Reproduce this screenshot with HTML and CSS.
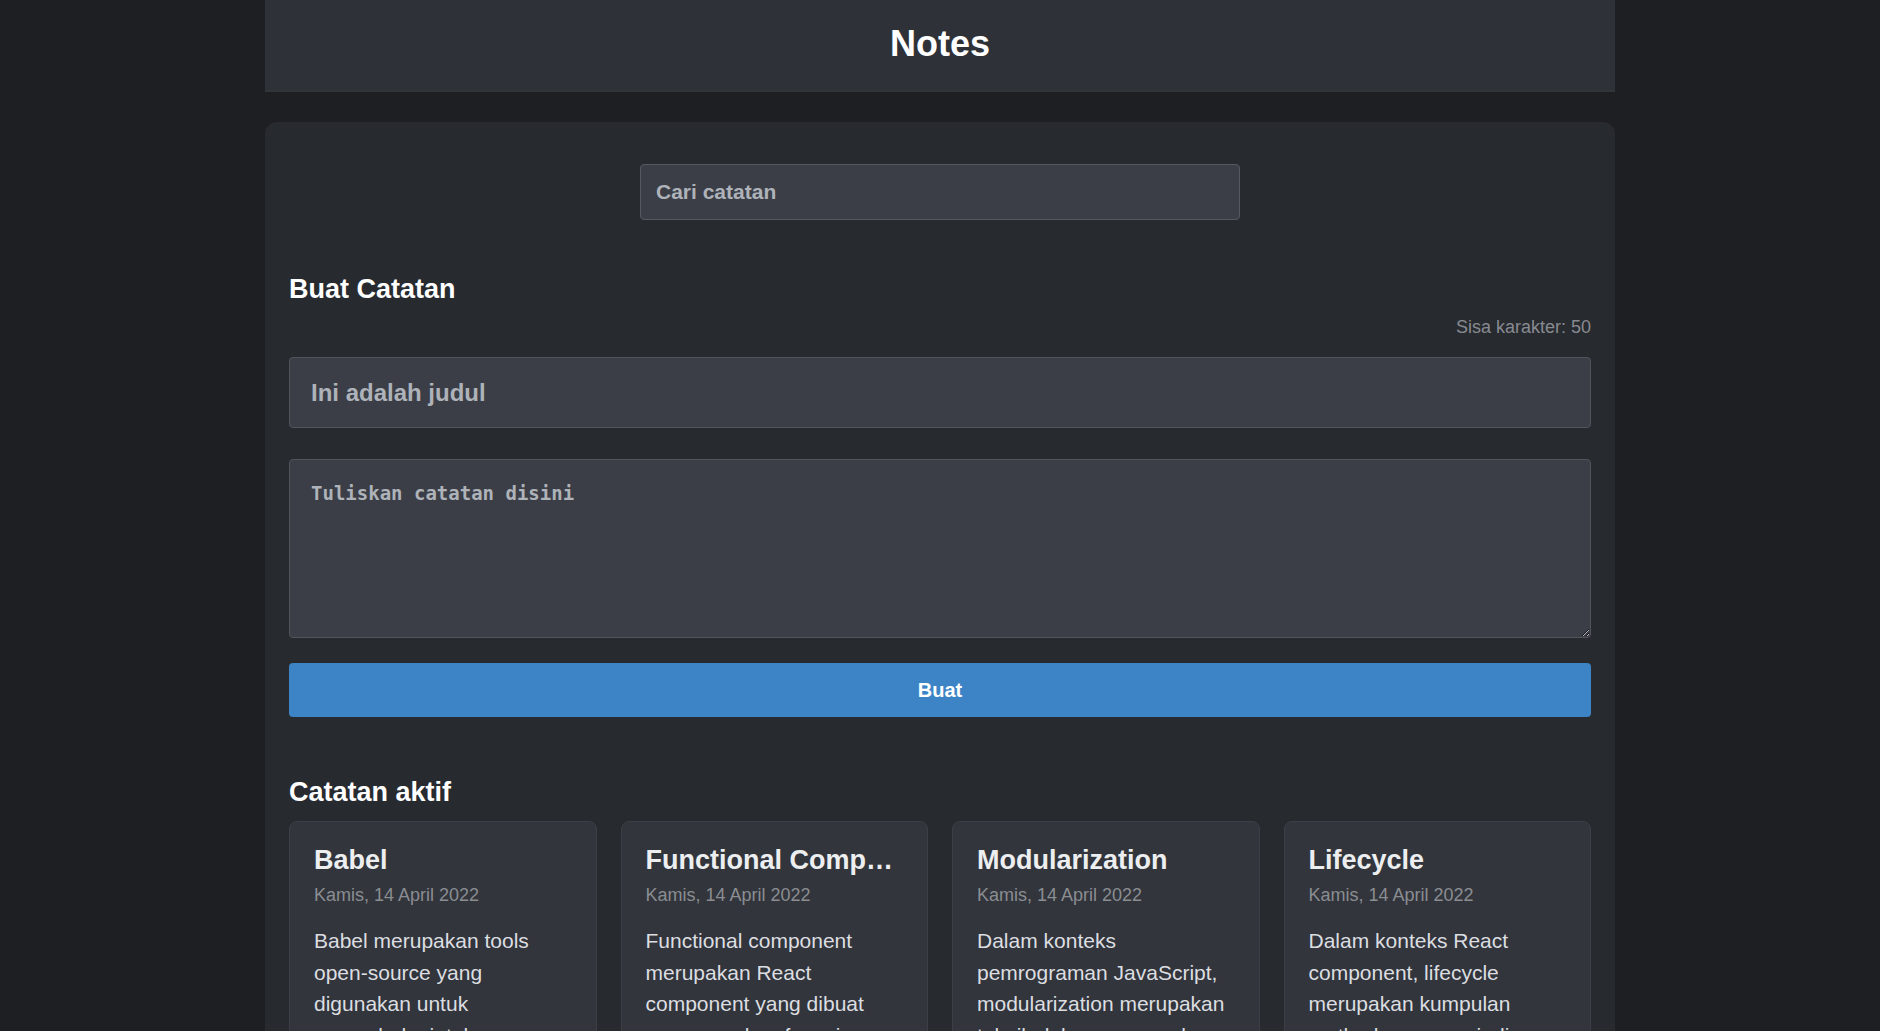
FILE: index.html
```html
<!DOCTYPE html>
<html lang="id">
<head>
<meta charset="utf-8">
<title>Notes</title>
<link rel="stylesheet" href="styles.css">
</head>
<body>
<div class="app">
  <header class="app-header">
    <h1 class="app-title">Notes</h1>
  </header>
  <main class="app-body">
    <div class="search">
      <input class="search-input" type="text" placeholder="Cari catatan">
    </div>
    <section class="create">
      <h2 class="section-title">Buat Catatan</h2>
      <p class="char-limit">Sisa karakter: 50</p>
      <input class="title-input" type="text" placeholder="Ini adalah judul">
      <textarea class="body-input" placeholder="Tuliskan catatan disini"></textarea>
      <button class="submit" type="button">Buat</button>
    </section>
    <section class="notes">
      <h2 class="section-title notes-title">Catatan aktif</h2>
      <div class="notes-grid">
        <article class="note">
          <h3 class="note-title">Babel</h3>
          <p class="note-date">Kamis, 14 April 2022</p>
          <p class="note-body">Babel merupakan tools open-source yang digunakan untuk mengubah sintaks ECMAScript 2015+ menjadi sintaks yang didukung oleh JavaScript engine versi lama.</p>
        </article>
        <article class="note">
          <h3 class="note-title">Functional Component</h3>
          <p class="note-date">Kamis, 14 April 2022</p>
          <p class="note-body">Functional component merupakan React component yang dibuat menggunakan fungsi JavaScript. Agar fungsi JavaScript dapat disebut component, ia harus mengembalikan React element.</p>
        </article>
        <article class="note">
          <h3 class="note-title">Modularization</h3>
          <p class="note-date">Kamis, 14 April 2022</p>
          <p class="note-body">Dalam konteks pemrograman JavaScript, modularization merupakan teknik dalam memecah atau menggunakan kode dalam berkas JavaScript secara terpisah berdasarkan tanggung jawabnya masing-masing.</p>
        </article>
        <article class="note">
          <h3 class="note-title">Lifecycle</h3>
          <p class="note-date">Kamis, 14 April 2022</p>
          <p class="note-body">Dalam konteks React component, lifecycle merupakan kumpulan method yang menjadi siklus hidup mulai dari component dibuat (constructor), dicetak (render), pasca-cetak (componentDidMount), dan sebagainya.</p>
        </article>
      </div>
    </section>
  </main>
</div>
</body>
</html>
```

FILE: styles.css
```css
* {
  box-sizing: border-box;
}

html, body {
  margin: 0;
  padding: 0;
  background: #1e1f23;
}

body {
  font-family: "Liberation Sans", Arial, sans-serif;
  color: #f2f3f5;
}

.app {
  width: 1350px;
  margin: 0 auto;
}

.app-header {
  height: 92px;
  background: #2e3137;
  border-bottom: 2px solid #333639;
  display: flex;
  align-items: center;
  justify-content: center;
}

.app-title {
  margin: 0;
  font-size: 36px;
  font-weight: 700;
  line-height: 1;
  color: #ffffff;
  padding-bottom: 2px;
}

.app-body {
  margin-top: 30px;
  background: #272a2f;
  border-radius: 12px;
  padding: 24px 24px 40px;
}

.search {
  display: flex;
  justify-content: center;
  padding-top: 18px;
}

.search-input {
  width: 600px;
  height: 56px;
  padding: 0 15px;
  background: #3b3e46;
  border: 1px solid #55585e;
  border-radius: 4px;
  font-family: "Liberation Sans", Arial, sans-serif;
  font-size: 21px;
  font-weight: 700;
  color: #e6e7ea;
  outline: none;
}

.search-input::placeholder,
.title-input::placeholder,
.body-input::placeholder {
  color: #aeb2b9;
  opacity: 1;
}

.create {
  display: flex;
  flex-direction: column;
}

.section-title {
  margin: 54px 0 0;
  font-size: 27px;
  line-height: 31px;
  font-weight: 700;
  color: #ffffff;
}

.char-limit {
  margin: 12px 0 0;
  text-align: right;
  font-size: 18px;
  line-height: 21px;
  color: #878a90;
}

.title-input {
  margin-top: 19px;
  height: 71px;
  padding: 0 21px;
  background: #3b3e46;
  border: 1px solid #515459;
  border-radius: 4px;
  font-family: "Liberation Sans", Arial, sans-serif;
  font-size: 24px;
  font-weight: 700;
  color: #e6e7ea;
  outline: none;
}

.body-input {
  margin-top: 31px;
  height: 179px;
  padding: 22px 21px;
  background: #3b3e46;
  border: 1px solid #515459;
  border-radius: 4px;
  font-family: "DejaVu Sans Mono", monospace;
  font-size: 19px;
  font-weight: 700;
  line-height: 22px;
  color: #e6e7ea;
  outline: none;
  resize: vertical;
}

.submit {
  margin-top: 25px;
  height: 54px;
  border: 0;
  border-radius: 4px;
  background: #3d84c6;
  color: #ffffff;
  font-family: "Liberation Sans", Arial, sans-serif;
  font-size: 20px;
  font-weight: 700;
}

.notes-title {
  margin-top: 60px;
}

.notes-grid {
  margin-top: 13px;
  display: grid;
  grid-template-columns: repeat(4, 1fr);
  gap: 24px;
}

.note {
  min-width: 0;
  background: #32353b;
  border: 1px solid #3c3f45;
  border-radius: 8px;
  padding: 23px 24px 24px;
}

.note-title {
  margin: 0;
  font-size: 27px;
  line-height: 31px;
  font-weight: 700;
  color: #eceef0;
  white-space: nowrap;
  overflow: hidden;
  text-overflow: ellipsis;
}

.note-date {
  margin: 9px 0 0;
  font-size: 18px;
  line-height: 21px;
  color: #8a8d92;
}

.note-body {
  margin: 19px 0 0;
  font-size: 21px;
  line-height: 31.5px;
  color: #dcdee1;
}
```
